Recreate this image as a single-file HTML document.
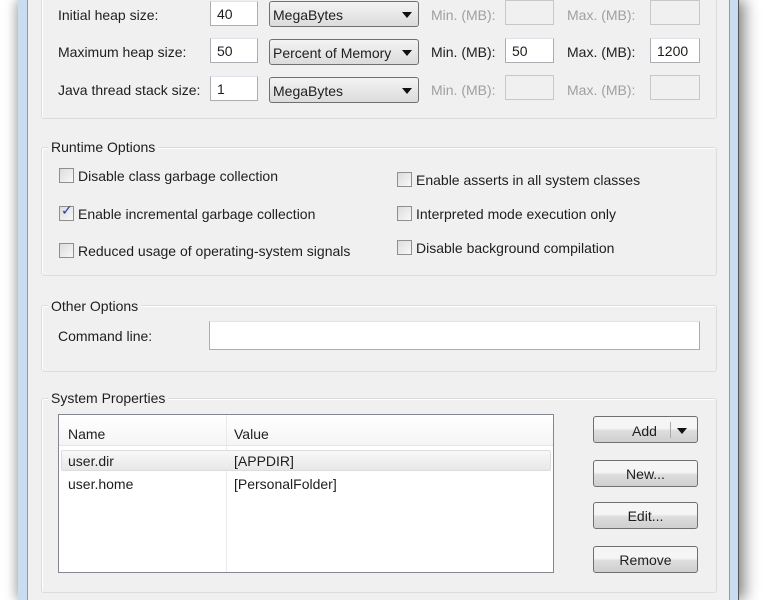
<!DOCTYPE html>
<html><head><style>
*{box-sizing:border-box;margin:0;padding:0}
body{width:764px;height:600px;overflow:hidden;background:#fff;font-family:"Liberation Sans",sans-serif;font-size:14px;color:#1e1e1e;position:relative}
.a{position:absolute}
.frame{left:18px;top:0;width:721px;height:600px;background:#c9dcf0;border-right:1px solid #555;box-shadow:6px 0 14px rgba(0,0,0,.45),-4px 0 10px rgba(0,0,0,.2)}
.inner{left:27px;top:0;width:703px;height:600px;background:#f0f0f0;border-left:1px solid #8a9aae;border-right:1px solid #8a9aae}
.grp{border:1px solid #dcdcdc;border-radius:3px;box-shadow:inset 1px 1px 0 #fff}
.tb{background:#fff;border:1px solid #abadb3;border-top-color:#e2e3ea;height:25px;padding:4px 6px;font-size:14px}
.tb.d{background:#f0f0f0;border-color:#c8c8c8}
.cb{background:linear-gradient(#f4f4f4,#dcdcdc);border:1px solid #707070;border-radius:3px;height:26px;padding:5px 3px;font-size:14px}
.cb:after{content:"";position:absolute;right:6px;top:10px;border-left:5px solid transparent;border-right:5px solid transparent;border-top:6px solid #111}
.dis{color:#a0a0a0}
.chk{width:15px;height:15px;border:1px solid #8f8f8f;background:linear-gradient(135deg,#dcdcdc,#f8f8f8)}
.btn{background:linear-gradient(#f5f5f5 45%,#dddddd 55%,#cfcfcf);border:1px solid #707070;border-radius:3px;text-align:center;font-size:14px;padding-top:5px}
</style></head><body>
<div class="a frame"></div>
<div class="a inner"></div>

<div class="a grp" style="left:41px;top:-10px;width:676px;height:129px"></div>
<div class="a" style="left:58px;top:7px">Initial heap size:</div>
<div class="a" style="left:58px;top:44px">Maximum heap size:</div>
<div class="a" style="left:58px;top:82px">Java thread stack size:</div>
<div class="a tb" style="left:210px;top:1px;width:48px">40</div>
<div class="a tb" style="left:210px;top:38px;width:48px">50</div>
<div class="a tb" style="left:210px;top:76px;width:48px">1</div>
<div class="a cb" style="left:269px;top:1px;width:150px">MegaBytes</div>
<div class="a cb" style="left:269px;top:39px;width:150px">Percent of Memory</div>
<div class="a cb" style="left:269px;top:77px;width:150px">MegaBytes</div>
<div class="a dis" style="left:431px;top:7px">Min. (MB):</div>
<div class="a" style="left:431px;top:44px">Min. (MB):</div>
<div class="a dis" style="left:431px;top:82px">Min. (MB):</div>
<div class="a dis" style="left:567px;top:7px">Max. (MB):</div>
<div class="a" style="left:567px;top:44px">Max. (MB):</div>
<div class="a dis" style="left:567px;top:82px">Max. (MB):</div>
<div class="a tb d" style="left:505px;top:0;width:49px"></div>
<div class="a tb" style="left:505px;top:38px;width:49px">50</div>
<div class="a tb d" style="left:505px;top:75px;width:49px"></div>
<div class="a tb d" style="left:650px;top:0;width:50px"></div>
<div class="a tb" style="left:650px;top:38px;width:50px">1200</div>
<div class="a tb d" style="left:650px;top:75px;width:50px"></div>

<div class="a grp" style="left:41px;top:147px;width:676px;height:129px"></div>
<div class="a" style="left:48px;top:139px;background:#f0f0f0;padding:0 3px">Runtime Options</div>
<div class="a chk" style="left:59px;top:168px"></div><div class="a" style="left:78px;top:168px">Disable class garbage collection</div>
<div class="a chk" style="left:59px;top:206px"></div><div class="a" style="left:61px;top:202px;color:#2a3fa0;font-size:14px">✓</div><div class="a" style="left:78px;top:206px">Enable incremental garbage collection</div>
<div class="a chk" style="left:59px;top:243px"></div><div class="a" style="left:78px;top:243px">Reduced usage of operating-system signals</div>
<div class="a chk" style="left:397px;top:172px"></div><div class="a" style="left:416px;top:172px">Enable asserts in all system classes</div>
<div class="a chk" style="left:397px;top:206px"></div><div class="a" style="left:416px;top:206px">Interpreted mode execution only</div>
<div class="a chk" style="left:397px;top:240px"></div><div class="a" style="left:416px;top:240px">Disable background compilation</div>

<div class="a grp" style="left:41px;top:305px;width:676px;height:67px"></div>
<div class="a" style="left:48px;top:298px;background:#f0f0f0;padding:0 3px">Other Options</div>
<div class="a" style="left:58px;top:328px">Command line:</div>
<div class="a tb" style="left:209px;top:321px;width:491px;height:29px"></div>

<div class="a grp" style="left:41px;top:398px;width:676px;height:195px"></div>
<div class="a" style="left:48px;top:390px;background:#f0f0f0;padding:0 3px">System Properties</div>
<div class="a" style="left:58px;top:414px;width:496px;height:159px;background:#fff;border:1px solid #828790">
 <div class="a" style="left:0;top:0;width:494px;height:31px;border-bottom:1px solid #e5e5e5;background:linear-gradient(#fff,#f5f5f5)"></div>
 <div class="a" style="left:167px;top:0;width:1px;height:157px;background:#eaeaea"></div>
 <div class="a" style="left:9px;top:11px">Name</div>
 <div class="a" style="left:175px;top:11px">Value</div>
 <div class="a" style="left:2px;top:35px;width:490px;height:21px;border:1px solid #dcdcdc;border-radius:2px;background:linear-gradient(#f8f8f8,#e8e8e8)"></div>
 <div class="a" style="left:9px;top:38px">user.dir</div>
 <div class="a" style="left:175px;top:38px">[APPDIR]</div>
 <div class="a" style="left:9px;top:61px">user.home</div>
 <div class="a" style="left:175px;top:61px">[PersonalFolder]</div>
</div>
<div class="a btn" style="left:593px;top:416px;width:105px;height:27px;padding-left:0"><span style="position:absolute;left:38px;top:6px">Add</span><span style="position:absolute;left:76px;top:5px;width:1px;height:16px;background:#aaa"></span><span style="position:absolute;left:83px;top:11px;border-left:5px solid transparent;border-right:5px solid transparent;border-top:6px solid #111"></span></div>
<div class="a btn" style="left:593px;top:460px;width:105px;height:27px">New...</div>
<div class="a btn" style="left:593px;top:502px;width:105px;height:27px">Edit...</div>
<div class="a btn" style="left:593px;top:546px;width:105px;height:27px">Remove</div>
</body></html>
